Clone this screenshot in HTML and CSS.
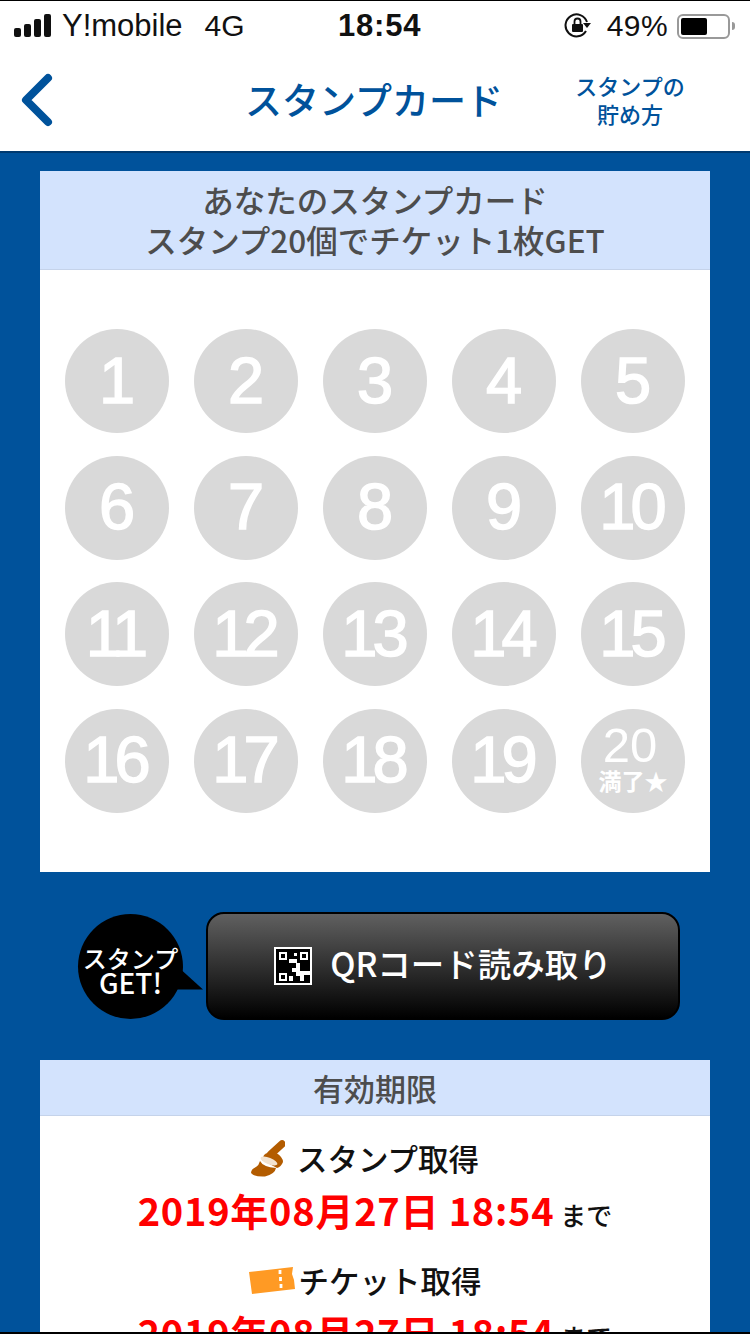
FILE: index.html
```html
<!DOCTYPE html>
<html lang="ja">
  <head>
    <meta charset="utf-8" />
    <title>スタンプカード</title>
    <meta name="viewport" content="width=device-width, initial-scale=1.0" />
    <link rel="stylesheet" href="styles.css">
  </head>
  <body>
    <div class="screen">
      <div class="status">
        <div class="status-left">
          <svg class="signal" width="40" height="24" viewBox="0 0 40 24">
            <rect x="0" y="14" width="7" height="9" rx="2" />
            <rect x="10" y="10" width="7" height="13" rx="2" />
            <rect x="20" y="5" width="7" height="18" rx="2" />
            <rect x="30" y="0" width="7" height="23" rx="2" />
          </svg>
          <span class="carrier">Y!mobile</span>
          <span class="network">4G</span>
        </div>
        <div class="status-time">18:54</div>
        <div class="status-right">
          <svg class="rotation" width="28" height="28" viewBox="0 0 28 28">
            <path d="M22 19 A11 11 0 1 1 23 10" fill="none" stroke="#111" stroke-width="2" />
            <path d="M19 11 L27 11 L23 16 Z" fill="#111" />
            <rect x="8" y="12" width="11" height="8" rx="1" fill="#111" />
            <path d="M10.5 12 V9.5 a3 3 0 0 1 6 0 V12" fill="none" stroke="#111" stroke-width="1.8" />
          </svg>
          <span class="battery-text">49%</span>
          <div class="battery"><div class="battery-level"></div></div>
          <div class="battery-tip"></div>
        </div>
      </div>

      <header class="nav">
        <a class="back">
          <svg width="34" height="54" viewBox="0 0 34 54">
            <path d="M28 5 L6 27 L28 49" fill="none" stroke="#00529b" stroke-width="8" stroke-linecap="round" stroke-linejoin="round" />
          </svg>
        </a>
        <h1>スタンプカード</h1>
        <a class="howto">スタンプの<br />貯め方</a>
      </header>

      <main class="content">
        <section class="card">
          <h2 class="card-title card-title-stamp">あなたのスタンプカード<br />スタンプ20個でチケット1枚GET</h2>
          <div class="stamps">
            <div class="stamp">1</div>
            <div class="stamp">2</div>
            <div class="stamp">3</div>
            <div class="stamp">4</div>
            <div class="stamp">5</div>
            <div class="stamp">6</div>
            <div class="stamp">7</div>
            <div class="stamp">8</div>
            <div class="stamp">9</div>
            <div class="stamp">10</div>
            <div class="stamp">11</div>
            <div class="stamp">12</div>
            <div class="stamp">13</div>
            <div class="stamp">14</div>
            <div class="stamp">15</div>
            <div class="stamp">16</div>
            <div class="stamp">17</div>
            <div class="stamp">18</div>
            <div class="stamp">19</div>
            <div class="stamp stamp-last"><span class="last-num">20</span><span class="last-label">満了★</span></div>
          </div>
        </section>

        <div class="qr-row">
          <div class="bubble">スタンプ<br /><span class="bubble-get">GET!</span></div>
          <button class="qr-button">
            <svg class="qr-icon" width="38" height="38" viewBox="0 0 38 38">
              <rect width="38" height="38" fill="#fff" />
              <rect x="2" y="2" width="34" height="34" fill="#000" />
              <rect x="5" y="5" width="8" height="8" fill="#fff" />
              <rect x="7" y="7" width="4" height="4" fill="#000" />
              <rect x="26" y="5" width="8" height="8" fill="#fff" />
              <rect x="28" y="7" width="4" height="4" fill="#000" />
              <rect x="5" y="26" width="8" height="8" fill="#fff" />
              <rect x="7" y="28" width="4" height="4" fill="#000" />
              <path d="M15 12 H23 V16 H26 V24 H36 V28 H30 V34 H26 V29 H22 V25 H18 V21 H22 V16 H15 Z" fill="#fff" />
              <rect x="15" y="29" width="4" height="5" fill="#fff" />
              <rect x="20" y="6" width="3" height="3" fill="#fff" />
            </svg>
            <span class="qr-label">QRコード読み取り</span>
          </button>
        </div>

        <section class="card">
          <h2 class="card-title card-title-limit">有効期限</h2>
          <div class="limits">
            <div class="limit-label limit-label-stamp">
              <svg width="34" height="37" viewBox="0 0 34 37">
                <path d="M31 4 L20 14" fill="none" stroke="#b35c00" stroke-width="7.5" stroke-linecap="round" />
                <path d="M13 15 Q19 10 24 12 Q32 17 32 22 Q30 27 26 28 L11 20 Z" fill="#b35c00" />
                <path d="M9 21 Q12 27 25 28 Q24 34 14 36.5 Q3 37 0 33 Q0 29 5 27 Q8 25 9 21 Z" fill="#b35c00" />
                <ellipse cx="18" cy="21" rx="9" ry="3.2" transform="rotate(22 18 21)" fill="#f3e3d0" />
              </svg>
              <span>スタンプ取得</span>
            </div>
            <div class="limit-date"><strong>2019年08月27日 18:54</strong> まで</div>
            <div class="limit-label limit-label-ticket">
              <svg width="46" height="27" viewBox="0 0 46 27">
                <path d="M0 5 L44 0 L43 7 L45 13 L46 22 L3 27 Z" fill="#ff9a24" />
                <path d="M31 3 V7 M31.5 10 V14 M32 17 V21" stroke="#fff" stroke-width="2.8" />
              </svg>
              <span>チケット取得</span>
            </div>
            <div class="limit-date"><strong>2019年08月27日 18:54</strong> まで</div>
          </div>
        </section>
      </main>
    </div>
  </body>
</html>
```

FILE: styles.css
```css
* {
  box-sizing: border-box;
}

html, body {
  margin: 0;
  height: 100%;
}

body {
  font-family: "Noto Sans CJK JP", "Liberation Sans", sans-serif;
  background: #00529b;
  overflow: hidden;
}

.screen {
  position: relative;
  height: 1334px;
  overflow: hidden;
  border-top: 1px solid #000;
  border-bottom: 2px solid #000;
}

.status {
  display: flex;
  align-items: center;
  height: 50px;
  padding: 0 15px 0 14px;
  background: #fff;
  color: #111;
  font-family: "Liberation Sans", sans-serif;
  font-size: 30px;
}

.status-left, .status-right {
  display: flex;
  align-items: center;
}

.status-left {
  width: 324px;
}

.signal {
  fill: #111;
  margin-right: 8px;
}

.carrier {
  font-size: 31px;
}

.network {
  margin-left: 22px;
}

.status-time {
  margin-right: auto;
  font-size: 31px;
  font-weight: bold;
  letter-spacing: 0.8px;
}

.rotation {
  margin-right: 15px;
}

.battery-text {
  margin-right: 9px;
  letter-spacing: 0.4px;
}

.battery {
  width: 53px;
  height: 25px;
  padding: 2px;
  border: 2px solid #999;
  border-radius: 6px;
}

.battery-level {
  width: 26px;
  height: 100%;
  border-radius: 2px;
  background: #000;
}

.battery-tip {
  width: 3px;
  height: 8px;
  margin-left: 2px;
  border-radius: 0 3px 3px 0;
  background: #999;
}

.nav {
  display: flex;
  align-items: center;
  height: 102px;
  padding: 0 0 4px 20px;
  background: #fff;
  border-bottom: 2px solid #003a70;
  color: #00529b;
}

.back {
  display: block;
  width: 34px;
  height: 54px;
  margin-top: 2px;
}

h1 {
  width: 254px;
  margin: 0 0 0 191px;
  font-size: 37px;
  font-weight: 500;
  line-height: 1;
  white-space: nowrap;
}

.howto {
  width: 120px;
  margin-left: 71px;
  font-size: 22px;
  font-weight: 500;
  line-height: 28px;
  text-align: center;
}

.content {
  padding: 18px 40px 0;
}

.card {
  background: #fff;
}

.card-title {
  margin: 0;
  background: #d3e3fd;
  border-bottom: 1px solid #c5d3ea;
  color: #4d4d4d;
  font-weight: 500;
  text-align: center;
}

.card-title-stamp {
  height: 99px;
  padding-top: 8px;
  font-size: 31.5px;
  line-height: 40px;
}

.card-title-limit {
  height: 56px;
  font-size: 31px;
  line-height: 55px;
}

.stamps {
  display: grid;
  grid-template-columns: repeat(5, 104px);
  grid-auto-rows: 104px;
  column-gap: 25px;
  row-gap: 22.67px;
  height: 602px;
  padding: 59px 0 0 25px;
}

.stamp {
  display: flex;
  flex-direction: column;
  align-items: center;
  justify-content: center;
  width: 104px;
  height: 104px;
  padding: 0 5px 2px 0;
  border-radius: 50%;
  background: #d9d9d9;
  color: #fff;
  font-family: "Liberation Sans", sans-serif;
  font-size: 65px;
  -webkit-text-stroke: 1.5px #fff;
  letter-spacing: -5px;
  line-height: 1;
}

.stamp-last {
  padding: 0;
  letter-spacing: 0;
  -webkit-text-stroke: 0;
}

.last-num {
  margin: -7px 6px 0 0;
  font-size: 49px;
  line-height: 46px;
}

.last-label {
  font-family: "Noto Sans CJK JP", sans-serif;
  font-size: 23px;
  font-weight: 700;
  line-height: 24px;
}

.qr-row {
  display: flex;
  align-items: center;
  height: 108px;
  margin: 40px 0 40px 38px;
}

.bubble {
  position: relative;
  width: 105px;
  height: 105px;
  padding-top: 32px;
  border-radius: 50%;
  background: #000;
  color: #fff;
  font-size: 24px;
  font-weight: 500;
  line-height: 24px;
  text-align: center;
}

.bubble-get {
  font-size: 28px;
}

.bubble::after {
  content: "";
  position: absolute;
  left: 99px;
  top: 57px;
  width: 26px;
  height: 19px;
  background: #000;
  clip-path: polygon(5px 0, 26px 19px, 0 19px);
}

.qr-button {
  display: flex;
  align-items: center;
  justify-content: center;
  gap: 18px;
  width: 474px;
  height: 108px;
  margin-left: 23px;
  padding: 0 0 4px 0;
  border: 2px solid #000;
  border-radius: 18px;
  background: linear-gradient(#606060, #000);
  color: #fff;
  font-family: "Noto Sans CJK JP", sans-serif;
  font-size: 33.5px;
  font-weight: 500;
}

.qr-icon {
  margin-top: 4px;
}

.qr-label {
  margin-bottom: 4px;
}

.limits {
  padding: 17px 0 0;
  text-align: center;
}

.limit-label {
  display: flex;
  align-items: center;
  justify-content: center;
  height: 50px;
  padding-right: 20px;
  color: #111;
  font-size: 30.5px;
  font-weight: 500;
}

.limit-label-stamp {
  gap: 12px;
}

.limit-label-ticket {
  gap: 4px;
}

.limit-date {
  height: 72px;
  color: #111;
  font-size: 26px;
  font-weight: 500;
  line-height: 54px;
}

.limit-date strong {
  color: #f00;
  font-family: "Noto Sans CJK JP", sans-serif;
  font-size: 38px;
  font-weight: 700;
  letter-spacing: 0.75px;
}
```
